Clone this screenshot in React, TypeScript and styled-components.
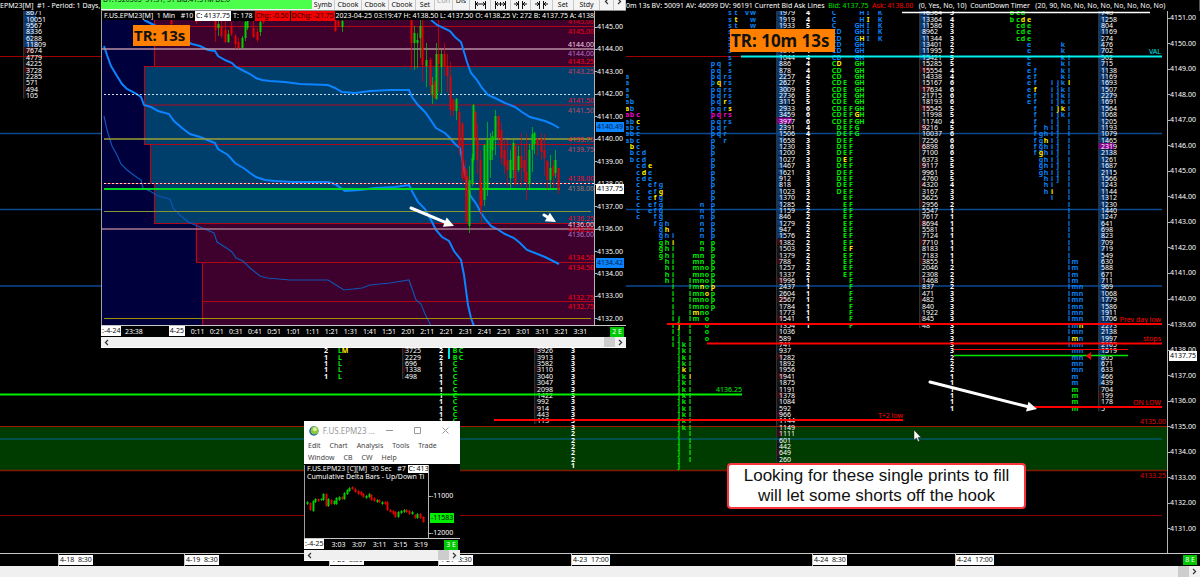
import React from "react";
import styled, { createGlobalStyle, css } from "styled-components";

const GlobalStyle = createGlobalStyle`
  * { box-sizing: border-box; }
  body { margin: 0; background: #000; font-family: "Noto Sans", "Open Sans", sans-serif; font-size: 7px; line-height: 10px; color: #fff; }
  button { font: inherit; }
`;

/* ---------- palette ---------- */
const BLUE = "#0a80f4";
const GREEN = "#00e800";
const YELLOW = "#ffee00";
const MAGENTA = "#f000d0";
const RED = "#ff0000";

/* ---------- shared layout parts ---------- */
const Desktop = styled.main`
  position: relative;
  display: flex;
  flex-direction: column;
  width: 100%;
  height: 100vh;
  min-height: 400px;
  overflow: hidden;
  background: #000;
`;

const Header = styled.header`
  display: flex;
  flex: none;
  height: 11px;
  padding-top: 1px;
  overflow: hidden;
  white-space: pre;
  border-right: 1px solid #555;
`;
const HeaderLeft = styled.div`
  flex: none;
  width: 622px;
`;
const HeaderRight = styled.div`
  flex: 1;
  margin-right: 32px;
  overflow: hidden;
`;
const Tint = styled.span<{ $color: string }>`
  color: ${(p) => p.$color};
`;

const Body = styled.div`
  display: flex;
  flex: 1;
  min-height: 0;
`;
const Plot = styled.svg`
  display: block;
  flex: 1;
  min-width: 0;
  height: 100%;
  overflow: hidden;
`;

const PriceAxis = styled.div<{ $width: number; $top: number; $bottom: number }>`
  position: relative;
  display: flex;
  flex: none;
  flex-direction: column;
  justify-content: space-between;
  width: ${(p) => p.$width}px;
  padding: ${(p) => p.$top}px 0 ${(p) => p.$bottom}px;
  border-left: 1px solid #b4b4b4;
  background: #000;
`;
const Tick = styled.span`
  display: flex;
  align-items: center;
  height: 10px;
  white-space: nowrap;
  &::before {
    content: "";
    width: 2px;
    height: 1px;
    background: #b4b4b4;
  }
`;
const PriceTag = styled.span<{ $top: number; $tone: "white" | "blue" | "lime" }>`
  position: absolute;
  top: ${(p) => p.$top}px;
  left: 1px;
  height: 10px;
  padding: 0 1px;
  white-space: nowrap;
  color: #000;
  ${(p) => p.$tone === "white" && css`background: #fff;`}
  ${(p) => p.$tone === "blue" && css`background: #0a84ff; color: #00204a;`}
  ${(p) => p.$tone === "lime" && css`background: #00f000;`}
`;

const MainTimeAxis = styled.footer`
  display: grid;
  flex: none;
  grid-template-columns: 58px 126px 145px 109px 133px 241px 143px 1fr auto;
  align-items: start;
  height: 13px;
  padding-right: 3px;
  border-top: 1px solid #c8c8c8;
`;
const DateCell = styled.span`
  height: 12px;
  padding: 1px 0 0 0;
  border-left: 1px solid #c8c8c8;
`;
const DateTag = styled.span`
  display: inline-block;
  height: 10px;
  padding: 0 1px;
  background: #fff;
  color: #111;
  white-space: pre;
  vertical-align: top;
`;
const ChartTag = styled.span`
  display: block;
  height: 10px;
  margin-top: 1px;
  padding: 0 2px;
  background: #00c800;
  color: #fff;
  white-space: pre;
`;

const Scroll = styled.div<{ $height: number }>`
  display: flex;
  flex: none;
  justify-content: space-between;
  height: ${(p) => p.$height}px;
  background: #f0f0f0;
  border-bottom: 1px solid #fff;
`;
const ScrollEnd = styled.div`
  display: flex;
`;
const Thumb = styled.span`
  width: 11px;
  background: #cdcdcd;
`;
const ScrollButton = styled.button`
  display: flex;
  align-items: center;
  justify-content: center;
  width: 11px;
  padding: 0;
  border: 0;
  background: none;
  color: #333;
`;

const Chevron = ({ left }: { left?: boolean }) => (
  <svg width="5" height="7" viewBox="0 0 5 7" aria-hidden="true">
    <path d={left ? "M4 1L1.4 3.5L4 6" : "M1 1L3.6 3.5L1 6"} fill="none" stroke="#333" strokeWidth="1.2" />
  </svg>
);

const ScrollBar = ({ height, hideLeft }: { height: number; hideLeft?: boolean }) => (
  <Scroll $height={height}>
    {hideLeft ? <span /> : <ScrollButton aria-label="Scroll left"><Chevron left /></ScrollButton>}
    <ScrollEnd>
      <Thumb />
      <ScrollButton aria-label="Scroll right"><Chevron /></ScrollButton>
    </ScrollEnd>
  </Scroll>
);

const Timer = styled.strong<{ $left: number; $top: number; $size: number }>`
  position: absolute;
  left: ${(p) => p.$left}px;
  top: ${(p) => p.$top}px;
  padding: 0 5px 0 1px;
  background: #ff8000;
  color: #111;
  font-size: ${(p) => p.$size}px;
  font-weight: 700;
  line-height: ${(p) => p.$size + 6}px;
  white-space: nowrap;
`;

const Callout = styled.aside`
  position: absolute;
  left: 727px;
  top: 463px;
  width: 299px;
  padding: 1px 0;
  border: 2px solid #f8343c;
  border-radius: 4px;
  background: #fff;
  color: #111;
  font-family: "Liberation Sans", Arial, sans-serif;
  font-size: 17px;
  line-height: 20px;
  text-align: center;
  white-space: pre-line;
`;

const Overlay = styled.svg`
  position: absolute;
  inset: 0;
  width: 100%;
  height: 100%;
  pointer-events: none;
`;

const Label = styled.text`
  font-size: 7px;
`;
const Volume = styled.text`
  font-size: 7px;
  fill: #fff;
`;
const Letter = styled.text`
  font-size: 7px;
  font-weight: 700;
  text-anchor: middle;
`;
const Count = styled.text`
  font-size: 7px;
  font-weight: 700;
  fill: #fff;
  text-anchor: middle;
`;

/* ---------- profile data (row 0 = 4151.00, one row per tick) ---------- */
const rowY = (row: number) => 18.5 + row * 6.38;

type VolumeColumn = { x: number; start: number; peak?: number; top: number; blueTo: number; values: number[] };

const volumes: VolumeColumn[] = [
  { x: 26, start: -1, top: 12000, blueTo: 4, values: [8671, 10051, 9567, 8336, 6288, 11809, 7674, 4779, 4225, 3728, 2285, 571, 494, 105] },
  { x: 405, start: 52, top: 40000, blueTo: 0, values: [3725, 2229, 696, 1338, 498] },
  { x: 537, start: 52, top: 40000, blueTo: 0, values: [3926, 3913, 3582, 3110, 3040, 3047, 2098, 1422, 992, 914, 443, 113] },
  {
    x: 779, start: -1, peak: 16, top: 3977, blueTo: 34,
    values: [1979, 1919, 1933, 1844, 1622, 1504, 1310, 1044, 886, 878, 2257, 2627, 3009, 2736, 3115, 2933, 3459, 3977, 2391, 1506, 1658, 1230, 1200, 1027, 1467, 1621, 912, 818, 1023, 1370, 1285, 1159, 846, 1279, 947, 1576, 1382, 1503, 1379, 788, 1257, 1337, 1996, 2437, 2604, 2567, 1784, 1773, 1541, 1354, 1036, 589, 741, 937, 1282, 1892, 1956, 1941, 1875, 1191, 1378, 1084, 592, 966, 1144, 1149, 1111, 601, 442, 649, 260],
  },
  {
    x: 922, start: -1, top: 21715, blueTo: 6,
    values: [16364, 13364, 11586, 8962, 11344, 13401, 11995, 15421, 15285, 15554, 14338, 15167, 17634, 21715, 18193, 15545, 11998, 11740, 9216, 10037, 7256, 6898, 7100, 6373, 9117, 9961, 4760, 4320, 3167, 5625, 2956, 5547, 7617, 8694, 5581, 7124, 7710, 8183, 7183, 3855, 2046, 2308, 1468, 837, 471, 482, 840, 1922, 845, 48],
  },
  {
    x: 1101, start: -1, peak: 20, top: 2319, blueTo: 57,
    values: [748, 1258, 804, 1169, 274, 476, 702, 502, 715, 1138, 1169, 1693, 1507, 2279, 1691, 1564, 1068, 1205, 1193, 1079, 1465, 2319, 2138, 1261, 1687, 2115, 1566, 1243, 1144, 1312, 1230, 1440, 1247, 641, 698, 823, 709, 719, 549, 630, 588, 671, 711, 969, 1068, 1779, 1586, 1911, 1706, 2273, 2138, 1997, 2105, 1519, 805, 671, 633, 466, 439, 704, 199, 178, 5],
  },
];

/* x, first row, run of counts */
const counts: [number, number, string][] = [
  [326, 52, "21111"],
  [441, 52, "221111111111"],
  [573, 52, "3333333333333222221"],
  [808, -1, "44544444444555566644333333333222222222222211111111"],
  [952, -1, "343332255446666554566665555433211111111122223333333333222111111"],
];

/* letter column: rows up to `split` are blue, the rest green; `hot` is the highlighted row */
type Run = { c: string; x: number; from: number; to: number; split: number; hot?: number };
const runs: Run[] = [
  { c: "a", x: 627, from: 9, to: 19, split: 99, hot: 14 },
  { c: "b", x: 632, from: 13, to: 22, split: 99, hot: 20 },
  { c: "c", x: 638, from: 15, to: 31, split: 99, hot: 16 },
  { c: "d", x: 644, from: 21, to: 25, split: 99, hot: 24 },
  { c: "e", x: 650, from: 23, to: 30, split: 99, hot: 23 },
  { c: "f", x: 655, from: 26, to: 32, split: 99, hot: 28 },
  { c: "g", x: 661, from: 26, to: 37, split: 34, hot: 27 },
  { c: "h", x: 667, from: 32, to: 41, split: 34, hot: 33 },
  { c: "i", x: 673, from: 34, to: 51, split: 34, hot: 35 },
  { c: "j", x: 679, from: 47, to: 70, split: 34, hot: 48 },
  { c: "k", x: 684, from: 51, to: 64, split: 34, hot: 55 },
  { c: "l", x: 690, from: 41, to: 69, split: 34, hot: 56 },
  { c: "m", x: 696, from: 37, to: 47, split: 34, hot: 46 },
  { c: "n", x: 702, from: 29, to: 46, split: 34, hot: 42 },
  { c: "o", x: 707, from: 39, to: 50, split: 34, hot: 43 },
  { c: "p", x: 713, from: 7, to: 45, split: 34, hot: 42 },
  { c: "q", x: 719, from: 7, to: 18, split: 99, hot: 10 },
  { c: "r", x: 725, from: 9, to: 19, split: 99, hot: 13 },
  { c: "s", x: 730, from: -1, to: 16, split: 99, hot: 14 },
  { c: "t", x: 736, from: -1, to: 1, split: 99, hot: 0 },
  { c: "v", x: 747, from: -1, to: -1, split: 99 },
  { c: "w", x: 753, from: -1, to: 1, split: 99 },
  { c: "L", x: 340, from: 52, to: 56, split: 0 },
  { c: "M", x: 345, from: 52, to: 52, split: 0, hot: 52 },
  { c: "B", x: 455, from: 52, to: 53, split: 0 },
  { c: "C", x: 461, from: 52, to: 53, split: 0 },
  { c: "C", x: 455, from: 54, to: 63, split: 0 },
  { c: "C", x: 834, from: -1, to: 16, split: 6 },
  { c: "D", x: 839, from: 2, to: 27, split: 6, hot: 7 },
  { c: "E", x: 845, from: 10, to: 40, split: 6, hot: 22 },
  { c: "F", x: 851, from: 14, to: 48, split: 6, hot: 36 },
  { c: "G", x: 857, from: 1, to: 18, split: 6, hot: 15 },
  { c: "H", x: 862, from: -1, to: 16, split: 6, hot: 3 },
  { c: "I", x: 868, from: -1, to: 3, split: 6, hot: 0 },
  { c: "K", x: 880, from: -1, to: 3, split: 6 },
  { c: "b", x: 1012, from: -1, to: 0, split: -9 },
  { c: "c", x: 1018, from: -1, to: 3, split: -9 },
  { c: "d", x: 1023, from: -1, to: 3, split: -9, hot: 0 },
  { c: "e", x: 1029, from: 0, to: 3, split: -9, hot: 0 },
  { c: "e", x: 1029, from: 4, to: 13, split: 99 },
  { c: "f", x: 1035, from: 8, to: 21, split: 99, hot: 11 },
  { c: "g", x: 1041, from: 18, to: 24, split: 99, hot: 21 },
  { c: "h", x: 1046, from: 17, to: 27, split: 99, hot: 19 },
  { c: "i", x: 1052, from: 10, to: 28, split: 99, hot: 27 },
  { c: "j", x: 1058, from: 10, to: 25, split: 99, hot: 14 },
  { c: "k", x: 1063, from: 4, to: 15, split: 99, hot: 14 },
  { c: "l", x: 1069, from: 6, to: 51, split: 99, hot: 10 },
  { c: "m", x: 1075, from: 38, to: 61, split: 57, hot: 50 },
  { c: "n", x: 1081, from: 42, to: 55, split: 99, hot: 48 },
];

const letterColor = (r: Run, row: number) => {
  if (row === 15 && r.x > 620 && r.x < 735) return MAGENTA;
  if (row === r.hot) return YELLOW;
  return row <= r.split ? BLUE : GREEN;
};

const Profile = () => (
  <g>
    {volumes.map((col) => (
      <g key={col.x}>
        <rect x={col.x - 3} y={rowY(col.start) - 3} width="2" height={col.values.length * 6.38} fill="#303030" />
        {col.values.map((v, i) => {
          const row = col.start + i;
          const peak = row === col.peak;
          return (
            <rect
              key={i}
              x={col.x - 2}
              y={rowY(row) - 3}
              width={peak ? 15 : 2 + (v / col.top) * 12}
              height="6"
              fill={peak ? "#8a0090" : row <= col.blueTo ? "#0c3a74" : i % 3 ? "#141414" : "#3a0c10"}
            />
          );
        })}
      </g>
    ))}
  </g>
);

const ProfileText = () => (
  <g>
    {volumes.map((col) =>
      col.values.map((v, i) => (
        <Volume key={`${col.x}-${i}`} x={col.x} y={rowY(col.start + i) + 3}>{v}</Volume>
      ))
    )}
    {counts.map(([x, start, run]) =>
      run.split("").map((n, i) => (
        <Count key={`${x}-${i}`} x={x} y={rowY(start + i) + 3}>{n}</Count>
      ))
    )}
    {runs.map((r) =>
      Array.from({ length: r.to - r.from + 1 }, (_, i) => r.from + i).map((row) => (
        <Letter key={`${r.c}${r.x}-${row}`} x={r.x} y={rowY(row) + 3} fill={letterColor(r, row)}>{r.c}</Letter>
      ))
    )}
  </g>
);

type HLineProps = { y: number; x1?: number; x2?: number; color: string; w?: number; dash?: string };
const HLine = ({ y, x1 = 0, x2 = 1162, color, w = 1, dash }: HLineProps) => (
  <line x1={x1} x2={x2} y1={y} y2={y} stroke={color} strokeWidth={w} strokeDasharray={dash} />
);

const Note = ({ x, y, color, children }: { x: number; y: number; color: string; children: string }) => (
  <Label x={x} y={y + 3} fill={color} textAnchor="end">{children}</Label>
);

const MainPlot = () => (
  <Plot>
    <g transform="translate(0 -11)">
      <rect x="0" y="426" width="1167" height="45" fill="#003c00" />
      <Profile />
      {[133.5, 209.5, 286].map((y) => <HLine key={y} y={y} color="#0a4a90" w={1.4} />)}
      <HLine y={439} color="#005868" w={1.5} />
      <HLine y={426.5} x2={1167} color="#a01800" />
      <HLine y={470.5} x2={1167} color="#801800" w={1.5} />
      <HLine y={515.5} color="#900000" />
      <HLine y={56.5} x2={741} color="#a00000" />
      <ProfileText />
      <rect x="448" y="346" width="2" height="13" fill="#00e0e0" />
      <HLine y={56.5} x1={741} color="#00f0f0" w={2} />
      <HLine y={12.5} x1={902} x2={1150} color="#fff" w={1.5} />
      <HLine y={324} x1={667} color={RED} w={2} />
      <HLine y={343.5} x1={707} color={RED} w={2} />
      <HLine y={349.5} x1={954} x2={1128} color={RED} />
      <HLine y={355.5} x1={954} x2={1128} color={GREEN} w={1.5} />
      <HLine y={394.5} x2={742} color="#00f000" w={2} />
      <HLine y={420} x1={494} x2={903} color={RED} w={2} />
      <HLine y={407} x1={1030} color={RED} w={2} />
      <path d="M1091 352V360L1086 356Z" fill={RED} />
      <Note x={1161} y={51} color="#00e8e8">VAL</Note>
      <Note x={1161} y={319} color={RED}>Prev day low</Note>
      <Note x={1161} y={338} color={RED}>stops</Note>
      <Note x={1161} y={402} color={RED}>ON LOW</Note>
      <Note x={903} y={415} color={RED}>T+2 low</Note>
      <Note x={742} y={389} color="#00f000">4136.25</Note>
      <Note x={1166} y={421} color="#e00000">4135.00</Note>
      <Note x={1166} y={475} color="#e00000">4133.25</Note>
    </g>
  </Plot>
);

/* ---------- one-minute chart window ---------- */
const FloatingWindow = styled.section<{ $left: number; $top: number; $width: number; $height: number }>`
  position: absolute;
  left: ${(p) => p.$left}px;
  top: ${(p) => p.$top}px;
  display: flex;
  flex-direction: column;
  width: ${(p) => p.$width}px;
  height: ${(p) => p.$height}px;
  overflow: hidden;
  background: #000;
`;
const Toolbar = styled.div`
  display: flex;
  flex: none;
  height: 11px;
  overflow: hidden;
  background: #f0f0f0;
  border-bottom: 1px solid #8c8c8c;
  color: #111;
`;
const Status = styled.div`
  width: 211px;
  height: 9px;
  padding-left: 2px;
  overflow: hidden;
  background: #4cff4c;
  line-height: 0px;
  white-space: pre;
`;
const ToolButton = styled.button<{ $width: number; $dim?: boolean; $raised?: boolean }>`
  display: flex;
  align-items: center;
  justify-content: center;
  width: ${(p) => p.$width}px;
  height: 10px;
  padding: 0;
  padding-bottom: ${(p) => (p.$raised ? 8 : 0)}px;
  border: 0;
  border-right: 1px solid #c8c8c8;
  background: #f4f4f4;
  color: ${(p) => (p.$dim ? "#999" : "#111")};
`;
const InfoLine = styled.div`
  flex: none;
  height: 10px;
  padding-left: 2px;
  overflow: hidden;
  white-space: pre;
`;
const Info = styled.span<{ $bg: string; $fg: string; $height?: number }>`
  display: inline-block;
  height: ${(p) => p.$height ?? 10}px;
  margin-right: 1px;
  padding: 0 1px;
  background: ${(p) => p.$bg};
  color: ${(p) => p.$fg};
  vertical-align: top;
`;
const MinuteAxis = styled.div`
  display: flex;
  flex: none;
  height: 12px;
  padding-right: 2px;
  border-top: 1px solid #c8c8c8;
`;
const Minutes = styled.div<{ $width: number }>`
  display: flex;
  flex: none;
  width: ${(p) => p.$width}px;
`;
const Minute = styled.span`
  flex: 1;
  height: 11px;
  text-align: center;
  line-height: 11px;
  white-space: nowrap;
`;
const Push = styled.span<{ $grow: number }>`
  flex: ${(p) => p.$grow};
`;

type Candle = [x: number, high: number, low: number, open: number, close: number, up: 0 | 1];
const candles: Candle[] = [
  [171, 20, 26, 20, 24, 0], [196, 20, 24, 20, 22, 0],
  [215, 20, 42, 20, 30, 0], [218, 20, 36, 24, 28, 1], [221, 20, 38, 26, 36, 0], [225, 20, 43, 30, 42, 0], [228, 30, 43, 34, 42, 1], [231, 22, 36, 26, 34, 0],
  [235, 34, 49, 36, 44, 0], [238, 38, 49, 42, 48, 0], [242, 36, 49, 38, 48, 1], [245, 20, 41, 22, 38, 1], [247, 20, 30, 20, 28, 1],
  [253, 20, 38, 28, 37, 0], [257, 28, 42, 32, 40, 0], [260, 20, 36, 22, 32, 1], [263, 20, 24, 20, 22, 0],
  [335, 20, 32, 20, 31, 0], [338, 20, 27, 21, 26, 0], [342, 20, 32, 21, 27, 1],
  [411, 20, 70, 20, 43, 0], [414, 26, 70, 33, 43, 1], [417, 33, 68, 40, 43, 1], [420, 20, 58, 26, 38, 1], [422, 20, 82, 27, 65, 0],
  [426, 43, 87, 60, 66, 1], [430, 58, 95, 60, 86, 0], [432, 77, 104, 85, 95, 1], [434, 80, 99, 82, 98, 0], [436, 43, 100, 54, 99, 1],
  [438, 20, 92, 54, 64, 0], [441, 50, 94, 54, 67, 1], [444, 43, 76, 54, 66, 0], [447, 54, 92, 66, 76, 0], [450, 62, 116, 76, 110, 0],
  [453, 98, 116, 100, 111, 0], [456, 98, 120, 99, 111, 1], [459, 108, 155, 112, 146, 0], [462, 122, 182, 124, 178, 0],
  [465, 160, 222, 168, 180, 0], [467, 170, 224, 176, 222, 0], [469, 166, 233, 180, 226, 1], [472, 154, 186, 158, 184, 1], [473, 104, 162, 105, 160, 1],
  [475, 110, 144, 112, 138, 0], [477, 124, 174, 138, 160, 0], [480, 150, 212, 160, 206, 0], [481, 184, 223, 188, 206, 0], [484, 144, 206, 145, 200, 1],
  [487, 122, 196, 140, 188, 1], [490, 133, 178, 138, 160, 1], [492, 131, 160, 136, 150, 1], [495, 110, 155, 116, 140, 1],
  [498, 115, 146, 116, 138, 0], [501, 122, 164, 130, 158, 0], [504, 139, 174, 150, 166, 0], [507, 140, 186, 160, 170, 0], [510, 150, 188, 160, 178, 1],
  [513, 139, 178, 143, 170, 1], [515, 143, 186, 146, 184, 0], [518, 146, 172, 156, 170, 1], [521, 133, 187, 156, 168, 0], [524, 144, 182, 160, 172, 0],
  [526, 134, 200, 172, 182, 0], [529, 144, 188, 150, 184, 1], [532, 127, 172, 134, 150, 1], [534, 132, 154, 133, 144, 1], [537, 138, 156, 139, 145, 0],
  [541, 133, 160, 139, 152, 0], [544, 134, 176, 150, 158, 0], [547, 160, 189, 161, 180, 0], [550, 155, 188, 168, 180, 1], [553, 160, 188, 166, 176, 0],
  [555, 150, 178, 160, 173, 1], [558, 168, 194, 168, 190, 0],
];

const Candles = ({ data, width }: { data: Candle[]; width: number }) => (
  <g>
    {data.map(([x, hi, lo, o, c, up], i) => (
      <g key={i} fill={up ? "#00d000" : "#e60000"}>
        <rect x={x} y={hi} width="1" height={lo - hi} opacity="0.7" />
        <rect x={x - (width - 1) / 2} y={o} width={width} height={Math.max(1, c - o)} />
      </g>
    ))}
  </g>
);

const bands = {
  upper: "M431 20L437 25L450 31L455 37L461 42L464 52L467 62L471 73L477 80L482 88L488 95L497 99L505 103L515 107L522 112L530 117L545 121L552 124L559 128",
  middle:
    "M144 20L152 24L162 29L174 36L192 44L200 46L208 50L215 51L218 56L225 60L232 63L236 67L244 71L250 74L256 78L262 80L270 81L285 82L300 84L328 85L335 88L342 92L355 93L370 91L390 90L409 90L412 97L418 105L425 112L430 119L436 128L445 133L450 138L455 144L460 148L462 158L464 170L470 195L477 205L481 213L486 220L491 226L497 229L505 234L514 238L520 243L527 250L535 253L545 257L559 264",
  lower:
    "M104 46L107 55L111 66L117 76L122 84L127 89L135 93L141 97L144 105L151 107L158 111L169 114L174 121L182 128L190 134L200 137L210 141L215 143L218 149L228 155L235 163L245 169L250 173L256 177L265 180L275 181L293 182L328 182L335 184L345 191L360 190L375 188L395 187L409 185L413 193L418 202L425 209L431 220L436 230L442 237L449 241L454 251L461 260L464 275L466 290L468 305L471 318L474 326",
  outer:
    "M104 116L107 130L112 146L117 155L121 164L127 170L135 176L141 180L143 188L150 191L158 196L170 199L173 208L180 215L188 222L200 227L214 233L217 242L225 247L232 252L236 258L243 261L250 268L260 276L267 278L290 280L328 280L336 285L344 290L362 288L370 285L390 283L409 280L416 300L421 304L425 314L431 326",
};

const levels: [number, string, string][] = [
  [21, "4145.00", "#e00010"], [31, "4145.00", "#f00010"],
  [44, "4144.00", "#f0d0e0"], [53, "4144.00", "#b878c8"],
  [61, "4143.25", "#ff0010"], [71, "4143.25", "#c84058"],
  [100, "4141.50", "#f01030"], [110, "4141.50", "#c05060"],
  [139, "4139.75", "#f03020"], [149, "4139.75", "#c05060"],
  [178, "4138.00", "#ff0020"], [188, "4138.00", "#a87868"],
  [218, "4136.25", "#ff0020"], [224, "4136.00", "#f0d0e0"], [229, "4136.25", "#ff0020"], [234, "4136.00", "#b878c8"],
  [257, "4134.50", "#ff0010"], [267, "4134.50", "#ff0010"],
  [297, "4132.75", "#ff0010"], [306, "4132.75", "#ff0010"],
];

const range = (from: number, to: number) =>
  Array.from({ length: from - to + 1 }, (_, i) => `${from - i}.00`);

const minuteLabels = Array.from({ length: 21 }, (_, i) => {
  const m = 11 + i * 10;
  return `${Math.floor(m / 60)}:${String(m % 60).padStart(2, "0")}`;
});

const SpacingIcon = ({ narrow, inward }: { narrow?: boolean; inward?: boolean }) => (
  <svg width="13" height="9" viewBox="0 0 13 9" fill="none" stroke="#111" strokeWidth="1" aria-hidden="true">
    {inward ? (
      <path d="M4.5 0V8M8.5 0V8M0 3H4M9 3H13M2 1L4 3L2 5M11 1L9 3L11 5" />
    ) : (
      <path d={narrow ? "M1.5 0V8M11.5 0V8M2 3H6M7 3H11M4 1L2 3L4 5M9 1L11 3L9 5M6.5 1V5" : "M1.5 0V8M11.5 0V8M2 3H11M4 1L2 3L4 5M9 1L11 3L9 5"} />
    )}
  </svg>
);

const MinuteWindow = () => (
  <FloatingWindow $left={101} $top={0} $width={525} $height={348}>
    <Toolbar>
      <Status>DT:1520505  31:31, 31 Bid:41.51M DL:0</Status>
      <ToolButton $width={23}>Symb</ToolButton>
      <ToolButton $width={27}>Cbook</ToolButton>
      <ToolButton $width={27}>Cbook</ToolButton>
      <ToolButton $width={27}>Cbook</ToolButton>
      <ToolButton $width={19}>Set</ToolButton>
      <ToolButton $width={18} $dim $raised>Con</ToolButton>
      <ToolButton $width={17} $raised>Dis</ToolButton>
      <ToolButton $width={21} aria-label="Widen bars"><SpacingIcon /></ToolButton>
      <ToolButton $width={20} aria-label="Narrow bars"><SpacingIcon narrow /></ToolButton>
      <ToolButton $width={20} aria-label="Increase spacing"><SpacingIcon inward /></ToolButton>
      <ToolButton $width={22} aria-label="Decrease spacing"><SpacingIcon inward /></ToolButton>
      <ToolButton $width={21}>Set</ToolButton>
      <ToolButton $width={26}>Stdy</ToolButton>
      <ToolButton $width={14} $raised aria-label="Previous"><Chevron left /></ToolButton>
      <ToolButton $width={12} $raised aria-label="Next"><Chevron /></ToolButton>
    </Toolbar>
    <Body>
      <Plot>
        <g transform="translate(-101 -11)">
          <rect x="101" y="20" width="493" height="306" fill="#00003c" />
          <rect x="154" y="20" width="440" height="46" fill="#3e002c" />
          <path d="M144.5 66.5H594V223H154.5V183.5H150.5V144.5H144.5Z" fill="#003e6c" />
          <path d="M196.5 223H594V326H202.5V262H196.5Z" fill="#3e002c" />
          <path
            d="M154.5 20V66.5M594 66.5H144.5V144.5H594M150.5 144.5V183.5M154.5 183.5V223.5H594M196.5 223.5V262.5H594M202.5 262.5V326M202.5 301.5H594M144.5 105H594M148 26.5H594"
            fill="none" stroke="#b00818" strokeWidth="1.2"
          />
          <path d={bands.outer} fill="none" stroke="#1054b4" strokeWidth="1.2" />
          <path d={bands.lower} fill="none" stroke="#0a84ff" strokeWidth="2" />
          <path d={bands.middle} fill="none" stroke="#0a84ff" strokeWidth="2" />
          <HLine y={49} x1={101} x2={594} color="#b890a4" w={1.6} />
          <HLine y={94.5} x1={104} x2={590} color="#d0dce8" dash="2 2" />
          <HLine y={139} x1={104} x2={592} color="#98a030" w={1.6} />
          <HLine y={183.5} x1={104} x2={594} color="#c00820" w={1.2} />
          <HLine y={183.5} x1={104} x2={594} color="#f0e0e0" dash="2 2" />
          <HLine y={189} x1={104} x2={560} color="#00d820" w={2} />
          <HLine y={211.5} x1={104} x2={591} color="#8a9430" w={1.2} />
          <HLine y={229} x1={101} x2={594} color="#a87890" w={1.6} />
          <HLine y={318.5} x1={104} x2={591} color="#a09000" w={1.2} />
          <Candles data={candles} width={2} />
          <path d={bands.upper} fill="none" stroke="#0a84ff" strokeWidth="2" />
          {levels.map(([y, text, color], i) => (
            <Note key={i} x={594} y={y} color={color}>{text}</Note>
          ))}
          <rect x="101" y="11" width="493" height="9" fill="#000" />
          <path d="M101.5 11V326" stroke="#a0a0a0" />
        </g>
      </Plot>
      <PriceAxis $width={32} $top={11} $bottom={1}>
        {range(4145, 4132).map((p) => <Tick key={p}>{p}</Tick>)}
        <PriceTag $top={111} $tone="blue">4140.49</PriceTag>
        <PriceTag $top={173} $tone="white">4137.75</PriceTag>
        <PriceTag $top={247} $tone="blue">4134.42</PriceTag>
      </PriceAxis>
    </Body>
    <MinuteAxis>
      <DateTag>:-4-24</DateTag>
      <Minutes $width={25}><Minute>23:38</Minute></Minutes>
      <Push $grow={22} />
      <DateTag>4-25</DateTag>
      <Push $grow={3} />
      <Minutes $width={402}>{minuteLabels.map((m) => <Minute key={m}>{m}</Minute>)}</Minutes>
      <Push $grow={20} />
      <ChartTag>2 E</ChartTag>
    </MinuteAxis>
    <ScrollBar height={11} />
  </FloatingWindow>
);

const WindowInfo = styled(InfoLine)`
  position: absolute;
  left: 102px;
  top: 11px;
  width: 493px;
`;

/* ---------- cumulative delta window ---------- */
const TitleBar = styled.div`
  display: flex;
  flex: none;
  align-items: center;
  height: 19px;
  padding-left: 5px;
  background: #fff;
  color: #999;
`;
const Title = styled.span`
  width: 58px;
  padding-left: 4px;
  font-size: 8px;
  white-space: nowrap;
`;
const WindowButton = styled.button`
  display: flex;
  align-items: center;
  justify-content: center;
  width: 29px;
  height: 18px;
  padding: 0;
  border: 0;
  background: none;
`;
const MenuRow = styled.nav`
  display: flex;
  flex: none;
  gap: 9px;
  height: 12px;
  padding-left: 4px;
  background: #fff;
`;
const MenuItem = styled.button`
  padding: 0;
  border: 0;
  background: none;
  color: #444;
  line-height: 12px;
`;
const DeltaBody = styled(Body)`
  position: relative;
  margin-top: 1px;
  border-left: 1px solid #a0a0a0;
`;
const DeltaText = styled.div`
  position: absolute;
  left: 2px;
  top: 0;
  width: 121px;
  overflow: hidden;
  white-space: pre;
  line-height: 8px;
`;

const deltaBars: [number, number, number, 0 | 1][] = [
  [307, 502, 504, 1], [310, 503, 510, 0], [313, 501, 511, 1], [315, 499, 502, 1], [318, 499, 501, 0], [321, 499, 500, 1], [323, 494, 500, 1], [326, 494, 506, 0],
  [328, 499, 506, 1], [331, 500, 504, 0], [334, 501, 504, 1], [336, 498, 504, 1], [339, 497, 500, 1], [342, 497, 499, 0], [344, 493, 499, 1], [347, 490, 494, 1],
  [349, 488, 491, 1], [352, 487, 489, 0], [355, 489, 492, 0], [358, 491, 494, 0], [361, 492, 495, 0], [363, 494, 497, 0], [366, 496, 498, 1], [369, 494, 497, 1],
  [371, 495, 500, 0], [374, 498, 501, 0], [377, 500, 502, 1], [379, 500, 502, 0], [382, 502, 504, 1], [385, 502, 504, 0], [387, 502, 510, 0], [390, 510, 512, 0],
  [393, 511, 514, 0], [395, 512, 517, 0], [398, 512, 517, 1], [401, 511, 513, 1], [404, 510, 512, 1], [406, 510, 512, 0], [409, 511, 514, 0], [412, 512, 514, 1],
  [415, 515, 518, 0], [417, 514, 518, 1], [420, 514, 518, 0], [423, 517, 522, 0],
];

const DeltaWindow = () => (
  <FloatingWindow $left={304} $top={421} $width={156} $height={140}>
    <TitleBar>
      <svg width="10" height="10" viewBox="0 0 10 10" aria-hidden="true">
        <circle cx="5" cy="5" r="4.8" fill="#2468a8" />
        <circle cx="5.8" cy="4.4" r="4" fill="#8cc840" />
        <circle cx="6" cy="3.2" r="2" fill="#e0f4a0" />
      </svg>
      <Title>F.US.EPM23 ...</Title>
      <WindowButton aria-label="Minimize"><svg width="7" height="7"><path d="M0 3.5H7" stroke="#999" /></svg></WindowButton>
      <WindowButton aria-label="Maximize"><svg width="7" height="7"><path d="M.5.5H6.5V6.5H.5Z" fill="none" stroke="#999" /></svg></WindowButton>
      <WindowButton aria-label="Close"><svg width="7" height="7"><path d="M.5.5L6.5 6.5M6.5.5L.5 6.5" stroke="#999" /></svg></WindowButton>
    </TitleBar>
    <MenuRow>
      {["Edit", "Chart", "Analysis", "Tools", "Trade"].map((m) => <MenuItem key={m}>{m}</MenuItem>)}
    </MenuRow>
    <MenuRow>
      {["Window", "CB", "CW", "Help"].map((m) => <MenuItem key={m}>{m}</MenuItem>)}
    </MenuRow>
    <DeltaBody>
      <Plot>
        <g transform="translate(-305 -465)">
          <Candles data={deltaBars.map(([x, a, b, up]) => [x, a - 1, b + 1, a, b, up] as Candle)} width={2} />
        </g>
      </Plot>
      <DeltaText>
        F.US.EPM23 [C][M]  30 Sec   #7 <Info $bg="#fff" $fg="#000" $height={8}>C: 4137</Info>
        {"\n"}Cumulative Delta Bars - Up/Down Ti
      </DeltaText>
      <PriceAxis $width={32} $top={26} $bottom={0}>
        <Tick>-11000</Tick>
        <Tick>-12000</Tick>
        <PriceTag $top={48} $tone="lime">-11583</PriceTag>
      </PriceAxis>
    </DeltaBody>
    <MinuteAxis>
      <DateTag>:-4-25</DateTag>
      <Push $grow={4} />
      <Minutes $width={103}>{["3:03", "3:07", "3:11", "3:15", "3:19"].map((m) => <Minute key={m}>{m}</Minute>)}</Minutes>
      <Push $grow={14} />
      <ChartTag>3 E</ChartTag>
    </MinuteAxis>
    <ScrollBar height={11} />
  </FloatingWindow>
);

const Arrow = ({ x1, y1, x2, y2, w }: { x1: number; y1: number; x2: number; y2: number; w: number }) => {
  const a = Math.atan2(y2 - y1, x2 - x1);
  const head = 10;
  const bx = x2 - head * Math.cos(a);
  const by = y2 - head * Math.sin(a);
  const px = 5 * Math.sin(a);
  const py = 5 * Math.cos(a);
  return (
    <g fill="#fff" stroke="#fff">
      <line x1={x1} y1={y1} x2={bx} y2={by} strokeWidth={w} strokeLinecap="round" />
      <path d={`M${x2} ${y2}L${bx + px} ${by - py}L${bx - px} ${by + py}Z`} stroke="none" />
    </g>
  );
};

const dates = ["4-18  8:30", "4-19  8:30", "4-20  8:30", "4-21  8:30", "4-23  17:00", "4-24  8:30", "4-24  17:00"];

export default function App() {
  return (
    <Desktop>
      <GlobalStyle />
      <Header>
        <HeaderLeft>EPM23[M]  #1 - Period: 1 Days,</HeaderLeft>
        <HeaderRight>
          10m 13s BV: 50091 AV: 46099 DV: 96191 Current Bid Ask Lines  <Tint $color="#00e000">Bid: 4137.75</Tint>
          {"  "}<Tint $color={RED}>Ask: 4138.00</Tint>
          {"   "}(0, Yes, No, 10)  CountDown Timer   (20, 90, No, No, No, No, No, No, No, No)
        </HeaderRight>
      </Header>
      <Body>
        <MainPlot />
        <PriceAxis $width={33} $top={2} $bottom={19}>
          {range(4151, 4131).map((p) => <Tick key={p}>{p}</Tick>)}
          <PriceTag $top={340} $tone="white">4137.75</PriceTag>
        </PriceAxis>
      </Body>
      <MainTimeAxis>
        <span />
        {dates.map((d) => <DateCell key={d}><DateTag>{d}</DateTag></DateCell>)}
        <ChartTag>8 E</ChartTag>
      </MainTimeAxis>
      <ScrollBar height={12} hideLeft />

      <MinuteWindow />
      <WindowInfo>
        F.US.EPM23[M]  1 Min   #10 <Info $bg="#fff" $fg="#000">C: 4137.75</Info>
        <Info $bg="#000" $fg="#fff">T: 178</Info>
        <Info $bg="#f00000" $fg="#300000">Chg: -0.50</Info>
        <Info $bg="#f00000" $fg="#300000">DChg: -21.75</Info>
        2023-04-25 03:19:47 H: 4138.50 L: 4137.50 O: 4138.25 V: 272 B: 4137.75 A: 4138
      </WindowInfo>
      <DeltaWindow />

      <Timer $left={133} $top={25} $size={15}>TR: 13s</Timer>
      <Timer $left={730} $top={29} $size={17}>TR: 10m 13s</Timer>
      <Callout>{"Looking for these single prints to fill\nwill let some shorts off the hook"}</Callout>
      <Overlay aria-hidden="true">
        <Arrow x1={411} y1={208} x2={454} y2={226} w={3} />
        <Arrow x1={544} y1={215} x2={556} y2={222} w={3} />
        <Arrow x1={930} y1={382} x2={1037} y2={409} w={3} />
        <path d="M914 430V440L916.5 438L918 441.5L919.5 441L918 437.5H921Z" fill="#fff" stroke="#222" strokeWidth=".5" />
      </Overlay>
    </Desktop>
  );
}
